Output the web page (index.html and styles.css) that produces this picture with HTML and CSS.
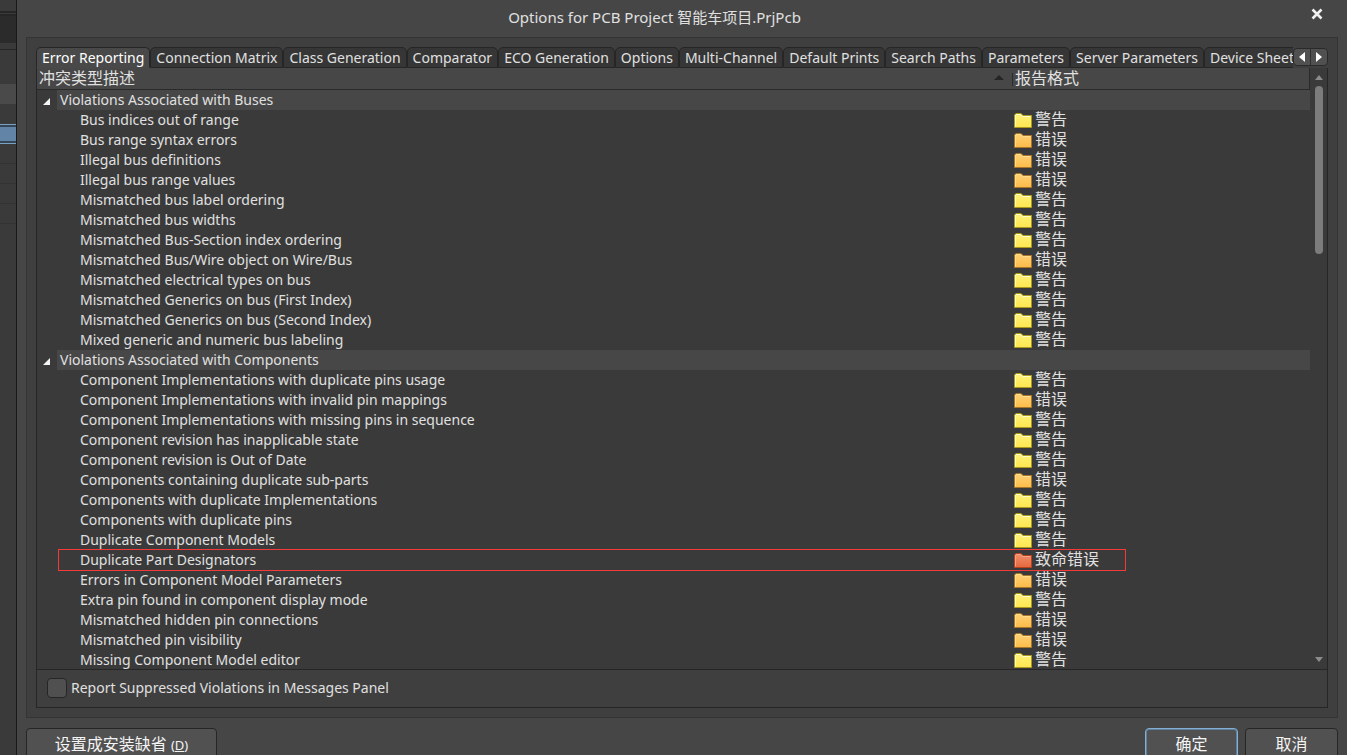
FILE: index.html
```
<!DOCTYPE html>
<html lang="zh-CN">
<head>
<meta charset="utf-8">
<title>Options for PCB Project</title>
<link rel="stylesheet" href="styles.css">
</head>
<body>
<svg class="defs" aria-hidden="true">
  <defs>
    <linearGradient id="gy" x1="0" y1="0" x2="0" y2="1"><stop offset="0" stop-color="#fff27a"/><stop offset="1" stop-color="#ffe750"/></linearGradient>
    <linearGradient id="go" x1="0" y1="0" x2="0" y2="1"><stop offset="0" stop-color="#ffd478"/><stop offset="1" stop-color="#fcbb48"/></linearGradient>
    <linearGradient id="gr" x1="0" y1="0" x2="0" y2="1"><stop offset="0" stop-color="#f09070"/><stop offset="1" stop-color="#e4683c"/></linearGradient>
    <symbol id="warn" viewBox="0 0 18 16"><path d="M.5 15.500V3L2 1.500h5L9 3.500h8.500v12z" fill="url(#gy)" stroke="#a89a1c"/><path d="M1.500 14.500V3.300L2.500 2.500h4L8.500 4.500h8" fill="none" stroke="#fffbd0"/></symbol>
    <symbol id="err" viewBox="0 0 18 16"><path d="M.5 15.500V3L2 1.500h5L9 3.500h8.500v12z" fill="url(#go)" stroke="#a8762a"/><path d="M1.500 14.500V3.300L2.500 2.500h4L8.500 4.500h8" fill="none" stroke="#ffdc94"/></symbol>
    <symbol id="fatal" viewBox="0 0 18 16"><path d="M.5 15.500V3L2 1.500h5L9 3.500h8.500v12z" fill="url(#gr)" stroke="#b8401c"/><path d="M1.500 14.500V3.300L2.500 2.500h4L8.500 4.500h8" fill="none" stroke="#f6a284"/></symbol>
  </defs>
</svg>
<div class="app">
  <div class="backdrop" aria-hidden="true">
    <div class="bd-top"></div><div class="bd-dark"></div><div class="bd-gap"></div><div class="bd-plain"></div>
    <div class="bd-light"></div><div class="bd-space"></div><div class="bd-selected"></div>
    <div class="bd-row"></div><div class="bd-row"></div><div class="bd-row"></div><div class="bd-row"></div>
  </div>
  <main class="dialog">
    <header class="titlebar">
      <h1 class="title">Options for PCB Project 智能车项目.PrjPcb</h1>
      <button class="close" aria-label="Close"><svg width="12" height="12" viewBox="0 0 12 12"><path d="M1.500 1.500l9 9M10.500 1.500l-9 9" stroke="#f0f0f0" stroke-width="2.600"/></svg></button>
    </header>
    <section class="frame">
      <nav class="tabbar">
        <div class="tabs" role="tablist">
          <button class="tab active" role="tab" aria-selected="true">Error Reporting</button>
          <button class="tab" role="tab">Connection Matrix</button>
          <button class="tab" role="tab">Class Generation</button>
          <button class="tab" role="tab">Comparator</button>
          <button class="tab" role="tab">ECO Generation</button>
          <button class="tab" role="tab">Options</button>
          <button class="tab" role="tab">Multi-Channel</button>
          <button class="tab" role="tab">Default Prints</button>
          <button class="tab" role="tab">Search Paths</button>
          <button class="tab" role="tab">Parameters</button>
          <button class="tab" role="tab">Server Parameters</button>
          <button class="tab" role="tab">Device Sheet</button>
        </div>
        <div class="spin">
          <button aria-label="Previous tabs"><svg width="6" height="10" viewBox="0 0 6 10"><path d="M6 0v10L0 5z" fill="#fff"/></svg></button>
          <button aria-label="Next tabs"><svg width="6" height="10" viewBox="0 0 6 10"><path d="M0 0v10l6-5z" fill="#fff"/></svg></button>
        </div>
      </nav>
      <div class="panel">
        <div class="listbox">
          <div class="scroller">
            <table class="grid">
              <colgroup><col><col class="col-report"></colgroup>
              <thead><tr><th><div class="head"><span>冲突类型描述</span><svg width="10" height="5" viewBox="0 0 10 5"><path d="M0 5L5 0l5 5z" fill="#252525"/></svg></div></th><th><div class="head second">报告格式</div></th></tr></thead>
              <tbody>
                <tr class="group"><th colspan="2"><div class="gcell"><svg class="tri" width="7" height="7" viewBox="0 0 7 7"><path d="M7 0v7H0z" fill="#f4f4f4"/></svg><span class="gname">Violations Associated with Buses</span></div></th></tr>
                <tr><td>Bus indices out of range</td><td><div class="lv"><svg><use href="#warn"/></svg>警告</div></td></tr>
                <tr><td>Bus range syntax errors</td><td><div class="lv"><svg><use href="#err"/></svg>错误</div></td></tr>
                <tr><td>Illegal bus definitions</td><td><div class="lv"><svg><use href="#err"/></svg>错误</div></td></tr>
                <tr><td>Illegal bus range values</td><td><div class="lv"><svg><use href="#err"/></svg>错误</div></td></tr>
                <tr><td>Mismatched bus label ordering</td><td><div class="lv"><svg><use href="#warn"/></svg>警告</div></td></tr>
                <tr><td>Mismatched bus widths</td><td><div class="lv"><svg><use href="#warn"/></svg>警告</div></td></tr>
                <tr><td>Mismatched Bus-Section index ordering</td><td><div class="lv"><svg><use href="#warn"/></svg>警告</div></td></tr>
                <tr><td>Mismatched Bus/Wire object on Wire/Bus</td><td><div class="lv"><svg><use href="#err"/></svg>错误</div></td></tr>
                <tr><td>Mismatched electrical types on bus</td><td><div class="lv"><svg><use href="#warn"/></svg>警告</div></td></tr>
                <tr><td>Mismatched Generics on bus (First Index)</td><td><div class="lv"><svg><use href="#warn"/></svg>警告</div></td></tr>
                <tr><td>Mismatched Generics on bus (Second Index)</td><td><div class="lv"><svg><use href="#warn"/></svg>警告</div></td></tr>
                <tr><td>Mixed generic and numeric bus labeling</td><td><div class="lv"><svg><use href="#warn"/></svg>警告</div></td></tr>
                <tr class="group"><th colspan="2"><div class="gcell"><svg class="tri" width="7" height="7" viewBox="0 0 7 7"><path d="M7 0v7H0z" fill="#f4f4f4"/></svg><span class="gname">Violations Associated with Components</span></div></th></tr>
                <tr><td>Component Implementations with duplicate pins usage</td><td><div class="lv"><svg><use href="#warn"/></svg>警告</div></td></tr>
                <tr><td>Component Implementations with invalid pin mappings</td><td><div class="lv"><svg><use href="#err"/></svg>错误</div></td></tr>
                <tr><td>Component Implementations with missing pins in sequence</td><td><div class="lv"><svg><use href="#warn"/></svg>警告</div></td></tr>
                <tr><td>Component revision has inapplicable state</td><td><div class="lv"><svg><use href="#warn"/></svg>警告</div></td></tr>
                <tr><td>Component revision is Out of Date</td><td><div class="lv"><svg><use href="#warn"/></svg>警告</div></td></tr>
                <tr><td>Components containing duplicate sub-parts</td><td><div class="lv"><svg><use href="#err"/></svg>错误</div></td></tr>
                <tr><td>Components with duplicate Implementations</td><td><div class="lv"><svg><use href="#warn"/></svg>警告</div></td></tr>
                <tr><td>Components with duplicate pins</td><td><div class="lv"><svg><use href="#warn"/></svg>警告</div></td></tr>
                <tr><td>Duplicate Component Models</td><td><div class="lv"><svg><use href="#warn"/></svg>警告</div></td></tr>
                <tr class="marked"><td>Duplicate Part Designators</td><td><div class="lv"><svg><use href="#fatal"/></svg>致命错误</div></td></tr>
                <tr><td>Errors in Component Model Parameters</td><td><div class="lv"><svg><use href="#err"/></svg>错误</div></td></tr>
                <tr><td>Extra pin found in component display mode</td><td><div class="lv"><svg><use href="#warn"/></svg>警告</div></td></tr>
                <tr><td>Mismatched hidden pin connections</td><td><div class="lv"><svg><use href="#err"/></svg>错误</div></td></tr>
                <tr><td>Mismatched pin visibility</td><td><div class="lv"><svg><use href="#err"/></svg>错误</div></td></tr>
                <tr><td>Missing Component Model editor</td><td><div class="lv"><svg><use href="#warn"/></svg>警告</div></td></tr>
              </tbody>
            </table>
          </div>
          <div class="scrollbar" aria-hidden="true">
            <svg width="8" height="5" viewBox="0 0 8 5"><path d="M0 5l4-5 4 5z" fill="#8c8c8c"/></svg>
            <div class="track"><div class="thumb"></div></div>
            <svg width="8" height="5" viewBox="0 0 8 5"><path d="M0 0l4 5 4-5z" fill="#8c8c8c"/></svg>
          </div>
        </div>
        <div class="suppress">
          <label><input type="checkbox">Report Suppressed Violations in Messages Panel</label>
        </div>
      </div>
    </section>
    <footer class="actions">
      <button class="btn defaults">设置成安装缺省 <small>(<u>D</u>)</small></button>
      <button class="btn ok">确定</button>
      <button class="btn">取消</button>
    </footer>
  </main>
</div>
</body>
</html>
```
FILE: styles.css
```
* { box-sizing: border-box; }

body {
  margin: 0;
  background: #464646;
  color: #e0e0e0;
  font: 14px/20px "Noto Sans", "Noto Sans CJK SC", sans-serif;
}

button { margin: 0; padding: 0; border: 0; background: none; color: inherit; font: inherit; }
svg { display: block; flex: none; }
.defs { position: absolute; width: 0; height: 0; }

.app { display: flex; height: 100vh; overflow: hidden; }

/* Strip of the main window left of the dialog */
.backdrop { flex: none; width: 17px; background: #3a3a3a; border-right: 1px solid #191919; }
.bd-top { height: 16px; border-bottom: 5px double #262626; }
.bd-dark { height: 27px; background: #2b2b2b; }
.bd-gap { height: 7px; border-bottom: 1px solid #262626; }
.bd-plain { height: 34px; }
.bd-light { height: 20px; background: #4a4a4a; }
.bd-space { height: 20px; }
.bd-selected { height: 20px; background: #6284a6; border-top: 1px solid #7aa0c4; border-bottom: 1px solid #7aa0c4; box-shadow: inset 0 2px #344656, inset 0 -2px #344656; }
.bd-row { height: 20px; border-bottom: 1px solid #333; }

.dialog { flex: 1; min-width: 0; padding: 0 9px; background: #464646; }

.titlebar { display: flex; align-items: center; height: 37px; padding-bottom: 3px; }
.title { flex: 1; margin: 0; padding-right: 28px; font-size: 15px; font-weight: 400; text-align: center; }
.close { padding: 0 15px 7px 0; }

.frame { padding: 9px; border: 1px solid #343434; background: #3f3f3f; }

.tabbar { display: flex; align-items: flex-end; }
.tabs { flex: 1; min-width: 0; display: flex; overflow: hidden; }
.tab {
  flex: none;
  height: 21px;
  padding: 0 5px;
  border: 1px solid #262626;
  border-radius: 5px 5px 0 0;
  background: #363636;
  line-height: 18px;
  white-space: nowrap;
}
.tab.active { background: #494949; border-bottom-color: #494949; color: #fff; }
.spin { display: flex; height: 18px; width: 35px; margin-bottom: 2px; border: 1px solid #2a2a2a; border-radius: 4px; background: #505050; }
.spin button { flex: 1; display: flex; align-items: center; justify-content: center; }
.spin button + button { border-left: 1px solid #303030; }

.panel { border: 1px solid #262626; border-top: 0; background: #3f3f3f; }
.listbox { display: flex; height: 602px; background: #3a3a3a; border-bottom: 1px solid #262626; overflow: hidden; }
.scroller { flex: 1; min-width: 0; }

.grid { width: 100%; border-collapse: separate; border-spacing: 0; table-layout: fixed; }
.col-report { width: 298px; }
.grid th, .grid td { padding: 0; text-align: left; font-weight: 400; white-space: nowrap; }
.grid thead th { height: 22px; background: #474747; border-bottom: 1px solid #2a2a2a; font-size: 16px; }
.grid thead th:last-child { border-right: 1px solid #2a2a2a; }
.head { display: flex; align-items: center; justify-content: space-between; height: 21px; padding: 0 8px 2px 2px; }
.head.second { padding-left: 3px; background: linear-gradient(#2c2c2c, #2c2c2c) 0 5px / 1px 13px no-repeat; }
.grid tbody tr { height: 20px; }
.grid td:first-child { padding-left: 43px; }
.gcell { display: flex; align-items: center; height: 20px; }
.tri { margin: 2px 7px 0 6px; }
.gname { flex: 1; padding-left: 3px; background: #474747; }
.lv { display: flex; align-items: flex-start; gap: 3px; height: 20px; padding-left: 2px; font-size: 16px; line-height: 18px; }
.lv svg { width: 18px; height: 16px; margin-top: 2px; }

.marked { position: relative; }
.marked td:first-child::after { content: ""; position: absolute; top: -1px; bottom: -1px; left: 21px; right: 184px; border: 1px solid #f23a3a; }

.scrollbar { flex: none; display: flex; flex-direction: column; align-items: center; gap: 6px; width: 17px; padding: 7px 0; }
.track { flex: 1; width: 8px; }
.thumb { height: 168px; border-radius: 4px; background: #7c7c7c; }

.suppress { height: 37px; padding: 8px 10px; }
.suppress label { display: inline-flex; align-items: center; gap: 4px; }
.suppress input { appearance: none; width: 20px; height: 20px; margin: 0; border: 1px solid #262626; border-radius: 4px; background: #505050; }

.actions { display: flex; gap: 7px; padding-top: 10px; }
.btn { width: 93px; height: 32px; border: 1px solid #262626; border-radius: 4px; background: #515151; color: #f4f4f4; font-size: 16px; line-height: 28px; }
.btn small { font-size: 13px; }
.defaults { width: 191px; margin-right: auto; }
.ok { border-color: #83aed6; box-shadow: inset 0 0 0 1px #5f7f9c; }
```
